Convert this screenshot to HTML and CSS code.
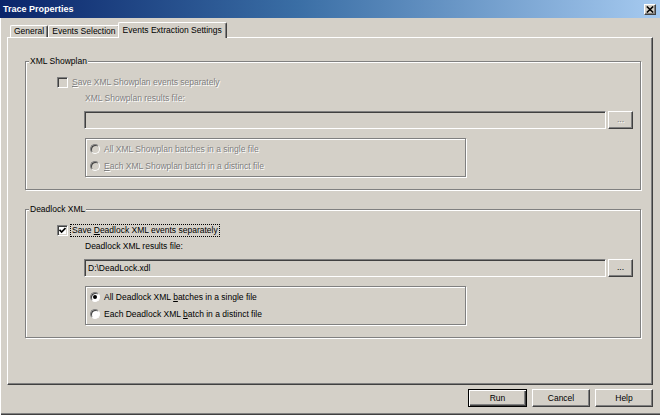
FILE: index.html
```html
<!DOCTYPE html>
<html lang="en">
<head>
  <meta charset="UTF-8">
  <title>Trace Properties</title>
  <link rel="stylesheet" href="styles.css">
</head>
<body>

<div class="window">
  <div class="titlebar">
    <span class="title">Trace Properties</span>
    <span class="close">
      <svg width="8" height="7" viewBox="0 0 8 7"><path d="M0.8 0.5 L7.2 6.5 M7.2 0.5 L0.8 6.5" stroke="#000" stroke-width="1.6" fill="none"/></svg>
    </span>
  </div>

  <div class="content">
    <div class="tabs">
      <div class="tab">General</div>
      <div class="tab">Events Selection</div>
      <div class="tab active">Events Extraction Settings</div>
    </div>

    <div class="panel">
      <!-- XML Showplan (disabled) -->
      <fieldset class="group disabled">
        <legend>XML Showplan</legend>
        <div class="check-row">
          <span class="checkbox"></span>
          <span class="check-label"><u>S</u>ave XML Showplan events separately</span>
        </div>
        <div class="field-label">XML Showplan results file:</div>
        <div class="file-row">
          <div class="textbox"></div>
          <div class="btn browse">...</div>
        </div>
        <div class="radio-box">
          <div class="radio-row"><span class="radio"></span><span>All XML Showplan batches in a single file</span></div>
          <div class="radio-row"><span class="radio"></span><span><u>E</u>ach XML Showplan batch in a distinct file</span></div>
        </div>
      </fieldset>

      <!-- Deadlock XML -->
      <fieldset class="group">
        <legend>Deadlock XML</legend>
        <div class="check-row">
          <span class="checkbox checked">
            <svg width="7" height="7" viewBox="0 0 7 7"><path d="M0.5 2.8 L2.6 5 L6.5 1" stroke="#000" stroke-width="1.7" fill="none"/></svg>
          </span>
          <span class="check-label focus">Save <u>D</u>eadlock XML events separately</span>
        </div>
        <div class="field-label">Deadlock XML results file:</div>
        <div class="file-row">
          <div class="textbox">D:\DeadLock.xdl</div>
          <div class="btn browse">...</div>
        </div>
        <div class="radio-box">
          <div class="radio-row"><span class="radio selected"></span><span>All Deadlock XML <u>b</u>atches in a single file</span></div>
          <div class="radio-row"><span class="radio"></span><span>Each Deadlock XML <u>b</u>atch in a distinct file</span></div>
        </div>
      </fieldset>
    </div>

    <div class="buttons">
      <div class="btn default">Run</div>
      <div class="btn">Cancel</div>
      <div class="btn">Help</div>
    </div>
  </div>
</div>

</body>
</html>
```

FILE: styles.css
```css
* { box-sizing: border-box; }
body {
  margin: 0;
  font-family: "Liberation Sans", Arial, sans-serif;
  font-size: 8.5px;
  color: #000;
  background: #d4d0c8;
}

.window {
  width: 660px;
  height: 415px;
  display: flex;
  flex-direction: column;
  background: #d4d0c8;
  box-shadow: inset 1px 0 #fff, inset 0 -1px #404040, inset 0 -2px #808080;
  overflow: hidden;
}

/* title bar */
.titlebar {
  height: 18px;
  flex-shrink: 0;
  display: flex;
  align-items: center;
  padding: 0 4px 0 3px;
  background: linear-gradient(to right, #0a246a, #3a6ea5 45%, #a6caf0);
  color: #fff;
}
.title {
  font-weight: bold;
  font-size: 9px;
}
.close {
  margin-left: auto;
  width: 12px;
  height: 11px;
  display: flex;
  align-items: center;
  justify-content: center;
  background: #d4d0c8;
  border: 1px solid;
  border-color: #fff #404040 #404040 #fff;
  box-shadow: inset -1px -1px #808080;
}

.content {
  display: flex;
  flex-direction: column;
  padding: 4px 7px 0;
}

/* tabs */
.tabs {
  display: flex;
  align-items: flex-end;
  height: 15px;
  margin-left: 3px;
  position: relative;
  z-index: 1;
}
.tab {
  height: 12px;
  line-height: 11px;
  padding: 0 3px;
  white-space: nowrap;
  border-top: 1px solid #fff;
  border-left: 1px solid #fff;
  border-right: 1px solid #404040;
  border-radius: 2px 2px 0 0;
  box-shadow: inset -1px 0 #808080;
}
.tab.active {
  height: 16px;
  line-height: 14px;
  margin-bottom: -1px;
  margin-left: -2px;
  padding: 0 4px;
  background: #d4d0c8;
}

.panel {
  height: 348px;
  padding: 17px 11px 0 17px;
  border: 1px solid;
  border-color: #fff #404040 #404040 #fff;
  box-shadow: inset -1px -1px #808080;
}

/* group boxes */
.group {
  margin: 0;
  padding: 9px 0 12px;
  min-inline-size: 0;
  border: 1px solid #808080;
  box-shadow: inset 1px 1px #fff, 1px 1px #fff;
}
.group + .group { margin-top: 13px; }
.group legend {
  margin-left: 3px;
  padding: 0 1px;
  line-height: 12px;
  background: #d4d0c8;
}

.check-row {
  display: flex;
  align-items: center;
  height: 13px;
  margin-left: 31px;
}
.checkbox {
  width: 11px;
  height: 11px;
  display: flex;
  align-items: center;
  justify-content: center;
  background: #fff;
  border: 1px solid;
  border-color: #808080 #fff #fff #808080;
  box-shadow: inset 1px 1px #404040, inset -1px -1px #d4d0c8;
}
.check-label {
  margin-left: 2px;
  padding: 0 1px;
  line-height: 11px;
  border: 1px solid transparent;
}
.check-label.focus { border: 1px dotted #000; }

.field-label {
  margin: 3px 0 0 59px;
  line-height: 12px;
}

.file-row {
  display: flex;
  gap: 2px;
  height: 18px;
  margin: 7px 0 0 58px;
}
.textbox {
  width: 522px;
  padding-left: 3px;
  line-height: 16px;
  background: #d4d0c8;
  border: 1px solid;
  border-color: #808080 #fff #fff #808080;
  box-shadow: inset 1px 1px #404040, inset -1px -1px #d4d0c8;
}

.btn {
  display: flex;
  align-items: center;
  justify-content: center;
  background: #d4d0c8;
  border: 1px solid;
  border-color: #fff #404040 #404040 #fff;
  box-shadow: inset -1px -1px #808080;
}
.btn.browse {
  width: 25px;
  padding-bottom: 3px;
}

.radio-box {
  width: 381px;
  height: 39px;
  margin: 9px 0 0 59px;
  padding: 3px 0 0 4px;
  display: flex;
  flex-direction: column;
  gap: 4px;
  border: 1px solid #808080;
  box-shadow: inset 1px 1px #fff, 1px 1px #fff;
}
.radio-row {
  display: flex;
  align-items: center;
  gap: 4px;
  height: 13px;
}
.radio {
  width: 10px;
  height: 10px;
  display: flex;
  align-items: center;
  justify-content: center;
  border-radius: 50%;
  background: #fff;
  border: 1px solid;
  border-color: #808080 #fff #fff #808080;
  box-shadow: inset 1px 1px #404040;
}
.radio.selected::after {
  content: "";
  width: 4px;
  height: 4px;
  border-radius: 50%;
  background: #000;
}

/* disabled group */
.disabled .check-label,
.disabled .field-label,
.disabled .radio-row,
.disabled .browse {
  color: #808080;
  text-shadow: 1px 1px 0 #fff;
}
.disabled .checkbox,
.disabled .radio { background: #d4d0c8; }

/* dialog buttons */
.buttons {
  display: flex;
  justify-content: flex-end;
  gap: 5px;
  margin-top: 4px;
}
.buttons .btn {
  width: 58px;
  height: 18px;
}
.buttons .btn.default {
  width: 59px;
  border: 1px solid #000;
  box-shadow: inset 1px 1px #fff, inset -1px -1px #404040, inset -2px -2px #808080;
}
```
